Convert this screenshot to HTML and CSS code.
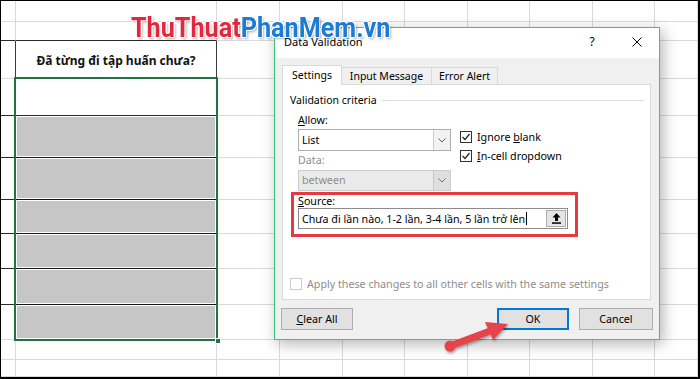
FILE: index.html
```html
<!DOCTYPE html>
<html lang="vi">
<head>
    <meta charset="UTF-8">
    <meta name="viewport" content="width=device-width, initial-scale=1.0">
    <title>Data Validation</title>
    <link rel="stylesheet" href="styles.css">
</head>
<body>
    <div class="screen">
        <div class="sheet">
            <div class="row"><div></div><div></div><div></div><div></div><div></div><div></div><div></div><div></div><div></div><div></div></div>
            <div class="row"><div class="k"></div><div class="k"></div><div></div><div></div><div></div><div></div><div></div><div></div><div></div><div></div></div>
            <div class="row"><div class="kr"></div><div class="head k kr">Đã từng đi tập huấn chưa?</div><div></div><div></div><div></div><div></div><div></div><div></div><div></div><div></div></div>
            <div class="row"><div class="k"></div><div class="k"></div><div></div><div></div><div></div><div></div><div></div><div></div><div></div><div></div></div>
            <div class="row"><div class="k"></div><div class="fill"></div><div></div><div></div><div></div><div></div><div></div><div></div><div></div><div></div></div>
            <div class="row"><div class="k"></div><div class="fill"></div><div></div><div></div><div></div><div></div><div></div><div></div><div></div><div></div></div>
            <div class="row"><div class="k"></div><div class="fill"></div><div></div><div></div><div></div><div></div><div></div><div></div><div></div><div></div></div>
            <div class="row"><div class="k"></div><div class="fill"></div><div></div><div></div><div></div><div></div><div></div><div></div><div></div><div></div></div>
            <div class="row"><div class="k"></div><div class="fill"></div><div></div><div></div><div></div><div></div><div></div><div></div><div></div><div></div></div>
            <div class="row"><div></div><div class="fill"></div><div></div><div></div><div></div><div></div><div></div><div></div><div></div><div></div></div>
            <div class="row"><div></div><div></div><div></div><div></div><div></div><div></div><div></div><div></div><div></div><div></div></div>
            <div class="row"><div></div><div></div><div></div><div></div><div></div><div></div><div></div><div></div><div></div><div></div></div>
        </div>

        <div class="selection"><span class="handle"></span></div>

        <div class="dialog">
            <div class="titlebar">
                <span class="title">Data Validation</span>
                <span class="help">?</span>
                <span class="close">
                    <svg width="10" height="10" viewBox="0 0 10 10"><path d="M0.5 0.5L9.5 9.5M9.5 0.5L0.5 9.5" stroke="#000" stroke-width="1" fill="none"/></svg>
                </span>
            </div>
            <div class="dlg-body">
                <div class="tabs">
                    <div class="tab active">Settings</div>
                    <div class="tab">Input Message</div>
                    <div class="tab">Error Alert</div>
                </div>
                <div class="panel">
                    <div class="legend"><span>Validation criteria</span><span class="rule"></span></div>
                    <div class="criteria">
                        <div class="fields">
                            <div class="lbl"><u>A</u>llow:</div>
                            <div class="combo">
                                <span class="txt">List</span>
                                <span class="drop"><svg width="8" height="5" viewBox="0 0 8 5"><path d="M0.5 0.5L4 4L7.5 0.5" stroke="#606060" fill="none"/></svg></span>
                            </div>
                            <div class="lbl off">Data:</div>
                            <div class="combo off">
                                <span class="txt">between</span>
                                <span class="drop"><svg width="8" height="5" viewBox="0 0 8 5"><path d="M0.5 0.5L4 4L7.5 0.5" stroke="#707070" fill="none"/></svg></span>
                            </div>
                        </div>
                        <div class="checks">
                            <div class="check">
                                <span class="box"><svg width="10" height="10" viewBox="0 0 10 10"><path d="M1.5 5L4 7.5L8.5 2" stroke="#222" stroke-width="1.2" fill="none"/></svg></span>
                                <span>Ignore <u>b</u>lank</span>
                            </div>
                            <div class="check">
                                <span class="box"><svg width="10" height="10" viewBox="0 0 10 10"><path d="M1.5 5L4 7.5L8.5 2" stroke="#222" stroke-width="1.2" fill="none"/></svg></span>
                                <span><u>I</u>n-cell dropdown</span>
                            </div>
                        </div>
                    </div>
                    <div class="mark">
                        <div class="lbl"><u>S</u>ource:</div>
                        <div class="ref">
                            <span class="val">Chưa đi lần nào, 1-2 lần, 3-4 lần, 5 lần trở lên<span class="caret"></span></span>
                            <span class="pick"><svg width="9" height="11" viewBox="0 0 9 11"><path d="M4.5 0L8.5 4.5H6V8H3V4.5H0.5Z" fill="#000"/><rect x="0" y="9.3" width="9" height="1.5" fill="#000"/></svg></span>
                        </div>
                    </div>
                    <div class="apply"><span class="box"></span><span>Apply these changes to all other cells with the same settings</span></div>
                </div>
                <div class="actions">
                    <button class="btn"><u>C</u>lear All</button>
                    <button class="btn ok">OK</button>
                    <button class="btn">Cancel</button>
                </div>
            </div>
        </div>

        <div class="logo"><span class="red">ThuThuat</span><span class="blue">PhanMem.vn</span></div>

        <svg class="arrow" width="80" height="45" viewBox="0 0 80 45">
            <path d="M11 33L51 18" stroke="#e8434b" stroke-width="7" stroke-linecap="round" fill="none"/>
            <circle cx="11" cy="33" r="5.5" fill="#e8434b"/>
            <path d="M46 9L69 11L54 27Z" fill="#e8434b"/>
        </svg>
    </div>
</body>
</html>
```

FILE: styles.css
```css
* {
    box-sizing: border-box;
}

body {
    margin: 0;
    background: #fff;
    font-family: "Noto Sans", sans-serif;
}

.screen {
    position: relative;
    width: 700px;
    height: 379px;
    overflow: hidden;
    background: #fff;
    border-style: solid;
    border-color: #000;
    border-width: 1px 2px 2px 1px;
}

/* spreadsheet */
.sheet {
    display: grid;
    grid-template-columns: 15px 201px 63px 63px 62px 63px 62px 63px 62px 43px;
    grid-template-rows: 21px 19px 38px 37px 42px 42px 34px 35px 36px 35px 20px 17px;
}

.row {
    display: contents;
}

.row > div {
    border-right: 1px solid #dadada;
    border-bottom: 1px solid #dadada;
}

.sheet .k {
    border-bottom-color: #2a2a2a;
}

.sheet .kr {
    border-right-color: #3a3a3a;
}

.sheet .head {
    display: flex;
    align-items: center;
    justify-content: center;
    padding-top: 2px;
    font-size: 12px;
    font-weight: 700;
    color: #111;
}

.sheet .fill {
    background: #c6c6c6;
    border-bottom-color: #151515;
    box-shadow: inset 0 0 0 1px #fff;
}

.selection {
    position: absolute;
    left: 13px;
    top: 76px;
    width: 204px;
    height: 264px;
    border: 2px solid #217346;
}

.handle {
    position: absolute;
    right: -5px;
    bottom: -5px;
    width: 6px;
    height: 6px;
    background: #217346;
    border: 1px solid #fff;
}

/* dialog */
.dialog {
    position: absolute;
    left: 273px;
    top: 26px;
    width: 386px;
    height: 313px;
    display: flex;
    flex-direction: column;
    background: #f0f0f0;
    border: 1px solid #3cc47f;
    box-shadow: 3px 4px 14px rgba(0, 0, 0, 0.3);
    font-size: 10.7px;
    color: #000;
}

.titlebar {
    height: 30px;
    display: flex;
    align-items: center;
    padding: 0 0 3px 9px;
    background: #fff;
}

.title {
    flex: 1;
    font-size: 11px;
}

.help {
    width: 20px;
    margin-right: 25px;
    text-align: center;
    font-size: 12px;
}

.close {
    width: 20px;
    margin-right: 12px;
    display: flex;
    justify-content: center;
}

.dlg-body {
    flex: 1;
    display: flex;
    flex-direction: column;
    padding: 7px 8px 9px 7px;
}

.tabs {
    height: 19px;
    display: flex;
    align-items: flex-end;
}

.tab {
    height: 17px;
    margin-left: -1px;
    display: flex;
    align-items: center;
    justify-content: center;
    border: 1px solid #d9d9d9;
    border-bottom: none;
    background: #f0f0f0;
    font-size: 10.5px;
}

.tab:nth-child(2) {
    width: 91px;
}

.tab:nth-child(3) {
    width: 67px;
}

.tab.active {
    position: relative;
    z-index: 1;
    width: 60px;
    height: 20px;
    margin-left: 0;
    margin-bottom: -1px;
    padding-bottom: 2px;
    background: #fff;
}

.panel {
    height: 216px;
    display: flex;
    flex-direction: column;
    padding: 8px 6px 9px 7px;
    background: #fff;
    border: 1px solid #d9d9d9;
}

.legend {
    display: flex;
    align-items: center;
    line-height: 14px;
    font-size: 10.5px;
}

.rule {
    flex: 1;
    height: 1px;
    margin-left: 5px;
    background: #dcdcdc;
}

.criteria {
    display: flex;
    margin-top: 6px;
}

.fields {
    width: 153px;
    margin-left: 8px;
}

.lbl {
    line-height: 14px;
}

.lbl.off {
    margin-top: 2px;
    color: #8d8d8d;
}

.combo {
    height: 22px;
    margin-top: 2px;
    display: flex;
    border: 1px solid #adadad;
    background: #fff;
}

.combo .txt {
    flex: 1;
    padding-left: 3px;
    line-height: 20px;
}

.drop {
    width: 17px;
    display: flex;
    align-items: center;
    justify-content: center;
    border-left: 1px solid #cfcfcf;
    background: #f2f2f2;
}

.combo.off {
    height: 21px;
    margin-top: 3px;
    border-color: #cccccc;
    background: #eaeaea;
    color: #8d8d8d;
}

.combo.off .txt {
    line-height: 19px;
}

.combo.off .drop {
    background: #dfdfdf;
    border-left-color: #c8c8c8;
}

.checks {
    margin-left: 9px;
    margin-top: 18px;
}

.check {
    display: flex;
    align-items: center;
    height: 12px;
    margin-bottom: 7px;
}

.box {
    width: 12px;
    height: 12px;
    margin-right: 5px;
    display: flex;
    align-items: center;
    justify-content: center;
    border: 1px solid #333;
    background: #fff;
}

.mark {
    width: 287px;
    margin: 1px 0 0 1px;
    padding: 0 7px 5px 4px;
    border: 3px solid #e53a3f;
}

.mark .lbl {
    line-height: 13px;
}

.ref {
    height: 21px;
    display: flex;
    border: 1px solid #8c8c8c;
    background: #fff;
}

.val {
    flex: 1;
    display: flex;
    align-items: center;
    padding-left: 3px;
}

.caret {
    width: 1px;
    height: 13px;
    margin-left: 1px;
    background: #000;
}

.pick {
    width: 20px;
    margin: 1px;
    display: flex;
    align-items: center;
    justify-content: center;
    border: 1px solid #adadad;
    background: #e5e5e5;
}

.apply {
    margin-top: auto;
    display: flex;
    align-items: center;
    height: 12px;
    color: #8d8d8d;
}

.apply .box {
    border-color: #cacaca;
}

.actions {
    display: flex;
    margin: 8px -2px 0 -1px;
}

.btn {
    width: 72px;
    height: 22px;
    padding: 0;
    border: 1px solid #adadad;
    background: #e1e1e1;
    font-family: "Noto Sans", sans-serif;
    font-size: 10.7px;
    color: #000;
}

.btn.ok {
    margin-left: auto;
    margin-right: 10px;
    border: 2px solid #0078d7;
}

.btn:last-child {
    width: 74px;
}

/* watermark */
.logo {
    position: absolute;
    left: 130px;
    top: 13px;
    font-family: Roboto, sans-serif;
    font-weight: 700;
    font-size: 28px;
    line-height: 28px;
    white-space: nowrap;
    transform: scaleX(0.9);
    transform-origin: left top;
    text-shadow: -1px -1px 0 #fff, 1px -1px 0 #fff, -1px 1px 0 #fff, 1px 1px 0 #fff, 2px 2px 3px rgba(0, 0, 0, 0.35);
}

.logo .red {
    color: #e2283f;
}

.logo .blue {
    color: #1c7bd2;
}

.arrow {
    position: absolute;
    left: 438px;
    top: 312px;
    filter: drop-shadow(1px 2px 1px rgba(0, 0, 0, 0.3));
}
```
